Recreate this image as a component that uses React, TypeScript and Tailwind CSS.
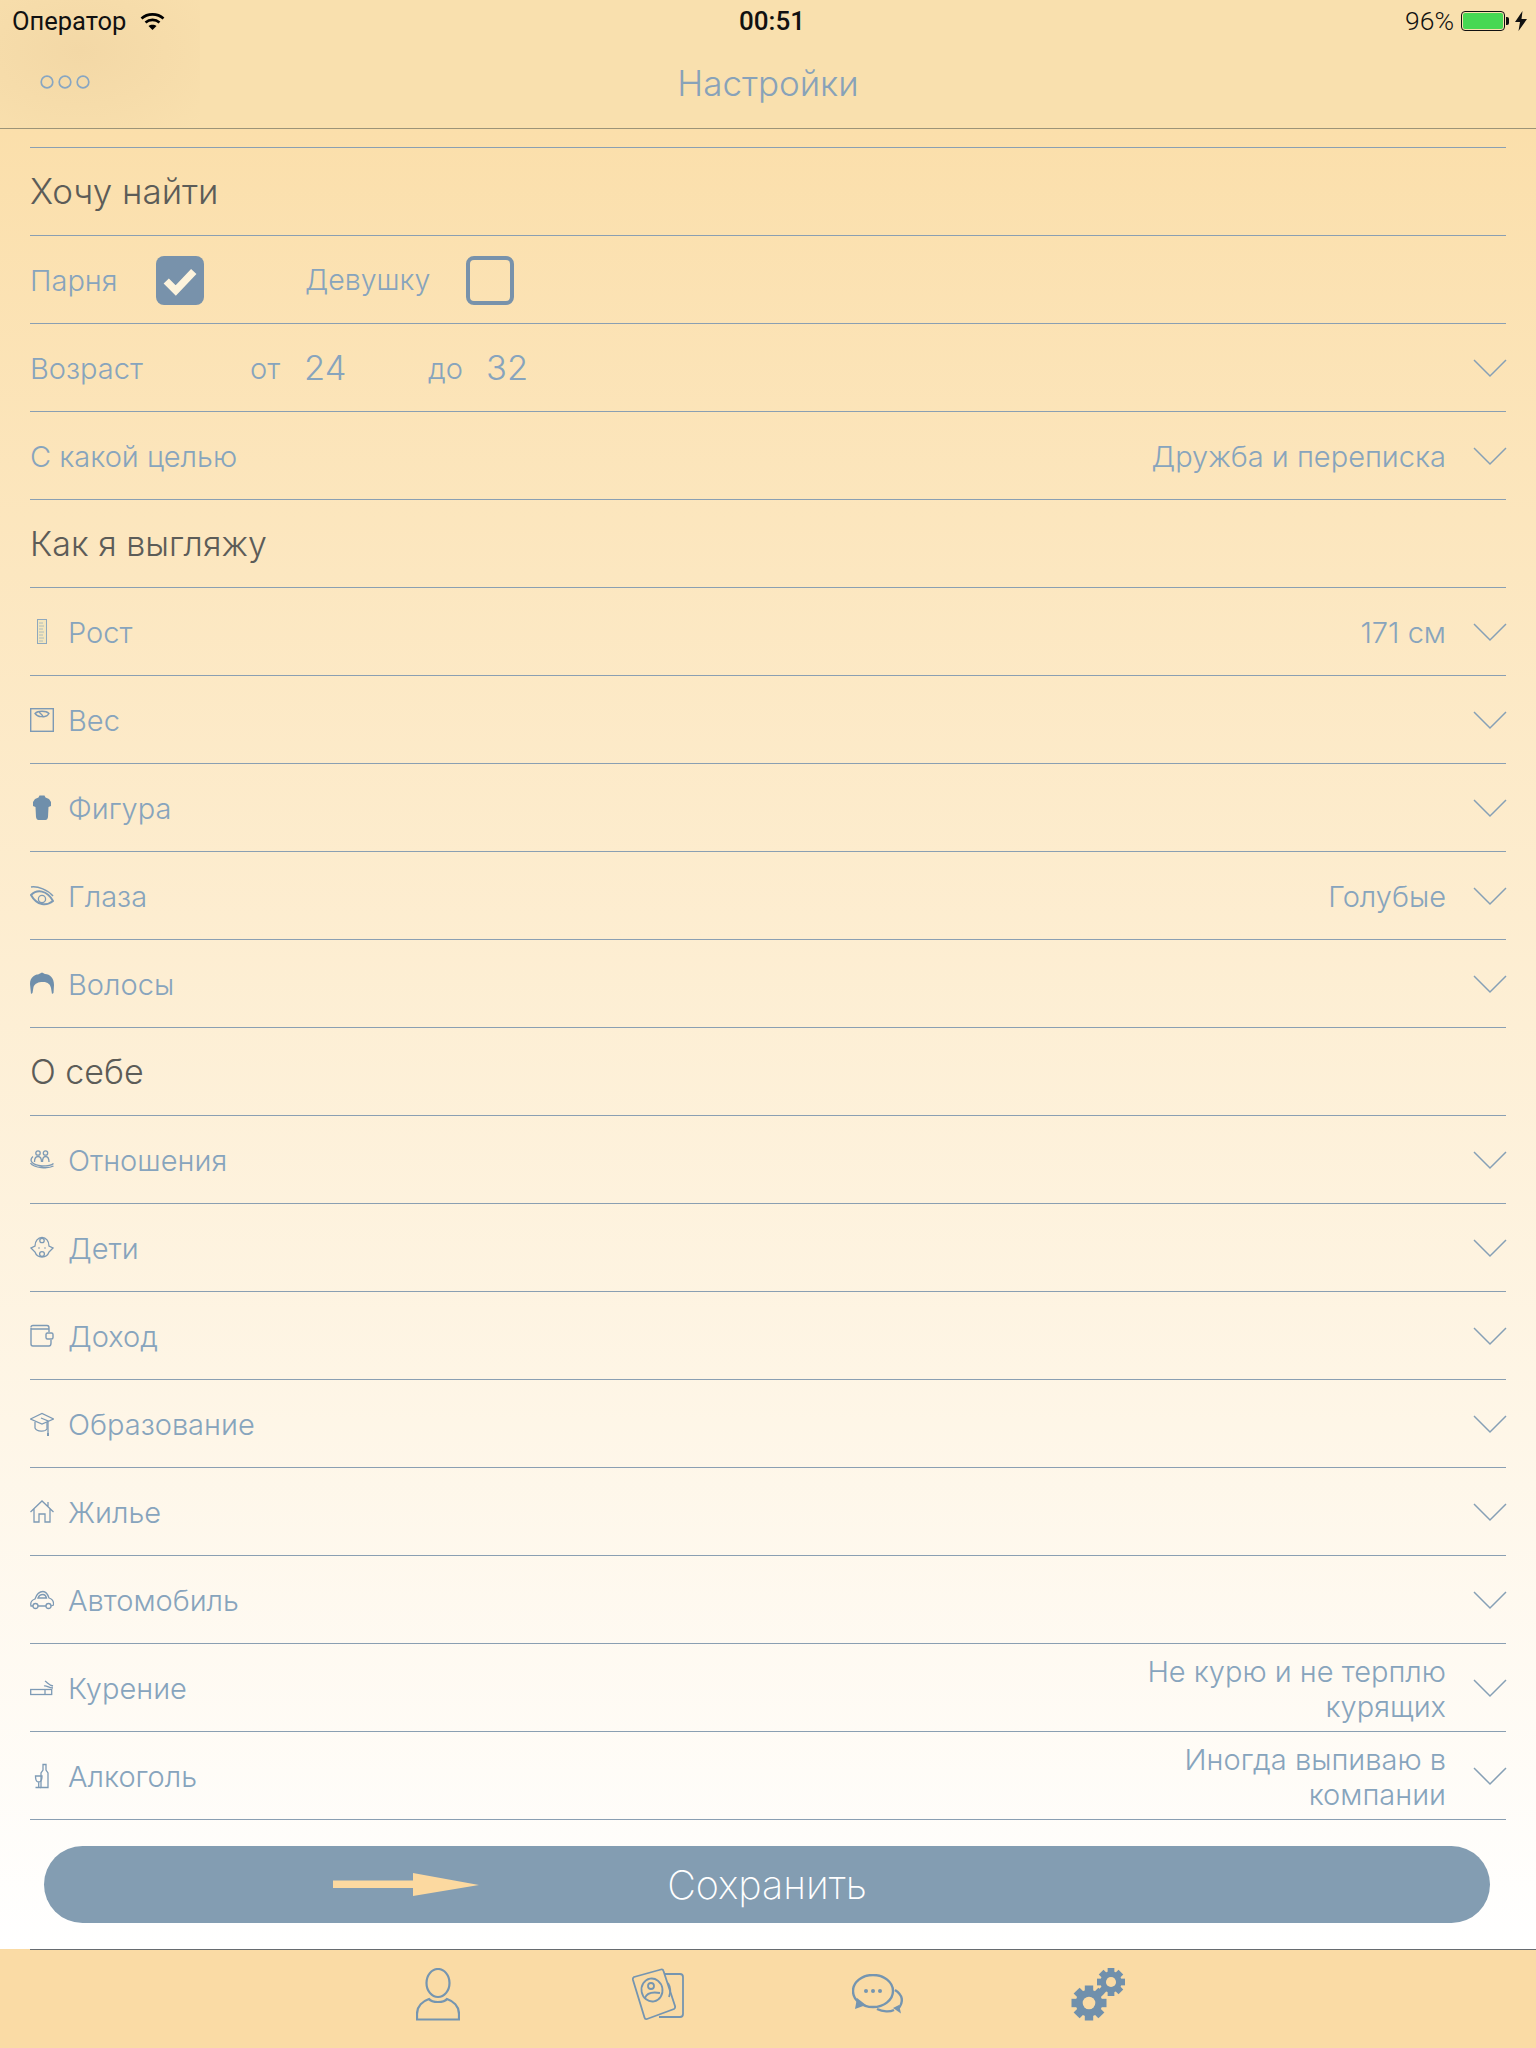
import React from 'react';

const Chevron = () => (
  <svg width="34" height="20" viewBox="0 0 34 20" fill="none" className="shrink-0 -mr-px">
    <path d="M1 2 L17 18 L33 2" stroke="#86a0b6" strokeWidth="1.5" />
  </svg>
);

const stroke = { fill: 'none', stroke: '#7d9ab5', strokeWidth: 1.3 };

const RulerIcon = () => (
  <svg width="24" height="26" viewBox="0 0 24 26">
    <rect x="7.5" y="0.5" width="9" height="24" fill="#f4e6bd" stroke="#8fa8bd" strokeWidth="1" />
    <path d="M9 4h4M9 7h5M9 10h4M9 13h5M9 16h4M9 19h5M9 22h4" stroke="#9fb2bd" strokeWidth="0.8" />
  </svg>
);
const ScaleIcon = () => (
  <svg width="24" height="26" viewBox="0 0 24 26">
    <rect x="0.7" y="1.7" width="22.6" height="22.6" {...stroke} strokeWidth="1.4" />
    <path d="M5 6.5 C8 3.5 16 3.5 19 6.5 C17 10 14 10 12 9.5 C9 10 7 9 5 6.5Z" {...stroke} />
    <path d="M9 5 L13 9" {...stroke} />
  </svg>
);
const ShirtIcon = () => (
  <svg width="24" height="26" viewBox="0 0 24 26">
    <path d="M9.500 0.500 H14.500 L15.500 2.500 L19 4 L21 7 L21 11 L18.500 12 L18 22 Q17.500 25 15.500 25 H8.500 Q6.500 25 6 22 L5.500 12 L3 11 L3 7 L5 4 L8.500 2.500Z" fill="#6f8fab" />
  </svg>
);
const EyeIcon = () => (
  <svg width="24" height="26" viewBox="0 0 24 26">
    <path d="M1 12 C7 6 17 7 23 18 C17 23 7 23 1 12Z" {...stroke} strokeWidth="2" />
    <circle cx="12" cy="16" r="3.600" {...stroke} />
    <path d="M1 4 C8 3 18 7 23 13" {...stroke} strokeWidth="1.500" />
  </svg>
);
const HairIcon = () => (
  <svg width="24" height="26" viewBox="0 0 24 26">
    <path d="M0 13 C0 6 5 3.500 8 3.500 L12 1.500 L15 3 C20 3 24 7 24 14 L23.500 22 L22 23 L21 17 C20 13 18 12 15 11 C10 10.500 5 11.500 3.500 16 L2.500 22 L1 23Z" fill="#6f8fab" />
  </svg>
);
const CoupleIcon = () => (
  <svg width="24" height="26" viewBox="0 0 24 26">
    <circle cx="8" cy="6" r="2.200" {...stroke} />
    <circle cx="15.500" cy="6" r="2.200" {...stroke} />
    <path d="M4.500 15 C4.500 11 6 9.500 8 9.500 C10 9.500 11.500 11 11.500 15 M12.500 15 C12.500 11 13.500 9.500 15.500 9.500 C17.500 9.500 19 11 19 15" {...stroke} />
    <path d="M3 9.500 C-1 13 1 18 12 19 C18 19 22 18 23.500 16.500 M0.500 16 C4 21 18 22 23.500 19" {...stroke} />
  </svg>
);
const BabyIcon = () => (
  <svg width="24" height="26" viewBox="0 0 24 26">
    <path d="M5 11 C5 6 8 2.500 12 2.500 C16 2.500 19 6 19 11 L23 13 L19 17 C18 20 15 22 12 22 C9 22 6 20 5 17 L1 13Z" {...stroke} />
    <circle cx="12" cy="5.500" r="2.200" {...stroke} />
    <circle cx="9" cy="13" r="0.800" fill="#7d9ab5" />
    <circle cx="15" cy="13" r="0.800" fill="#7d9ab5" />
    <circle cx="12" cy="19" r="2.400" {...stroke} />
  </svg>
);
const WalletIcon = () => (
  <svg width="24" height="26" viewBox="0 0 24 26">
    <path d="M1 4.500 Q1 2.500 3 2.500 H17 Q19 2.500 19 5 V9 M1 5 V21 Q1 23 3 23 H19 Q21 23 21 20 V17 M1 6 H19" {...stroke} strokeWidth="1.400" />
    <rect x="16" y="10" width="7" height="6" rx="1.500" {...stroke} strokeWidth="1.400" />
  </svg>
);
const CapIcon = () => (
  <svg width="24" height="26" viewBox="0 0 24 26">
    <path d="M0.500 8 L12 2.500 L23.500 8 L12 13Z" {...stroke} />
    <path d="M5 11 V17 C7 21 15 21 17 18 V11" {...stroke} />
    <path d="M11 7 L18 10 V22" {...stroke} />
    <path d="M17 22 h2 v3 h-2z" fill="#7d9ab5" />
  </svg>
);
const HouseIcon = () => (
  <svg width="24" height="26" viewBox="0 0 24 26">
    <path d="M0.500 13 L12 2 L23.500 13 M4 10 V23 H9 V15 H15 V23 H20 V10 M18 7.500 V3" {...stroke} />
  </svg>
);
const CarIcon = () => (
  <svg width="24" height="26" viewBox="0 0 24 26">
    <path d="M3 19 H1 C0 15 2 13 5 12 C7 6 10 4.500 13 4.500 C16 4.500 18 8 19 11 C22 12 24 14 23.500 18 L21 19 M8 19 H16" {...stroke} />
    <path d="M8 11 C9 8 11 7.500 13 7.500 C15 7.500 16 9 16.500 11Z" {...stroke} />
    <circle cx="5.500" cy="19" r="2.500" {...stroke} />
    <circle cx="18.500" cy="19" r="2.500" {...stroke} />
  </svg>
);
const SmokeIcon = () => (
  <svg width="24" height="26" viewBox="0 0 24 26">
    <rect x="0.700" y="14.500" width="21" height="5" {...stroke} />
    <path d="M15 14.500 V19.500 M14 11 C17 10 18 13 23 13 M15 6 C18 8 19 10 23 11" {...stroke} />
  </svg>
);
const BottleIcon = () => (
  <svg width="24" height="26" viewBox="0 0 24 26">
    <path d="M13 1.500 H16 V7 L18 10 V24.500 H11 V10 L13 7Z" {...stroke} />
    <path d="M5.500 13 H12 C12 18 10 19 8.700 19 C7 19 5.500 18 5.500 13Z M8.700 19 V24.500 M5.500 24.500 H11" {...stroke} />
  </svg>
);

const Gear = ({ cx, cy, r }: { cx: number; cy: number; r: number }) => (
  <g>
    {[0, 45, 90, 135].map((a) => (
      <rect
        key={a}
        x={cx - r * 0.24}
        y={cy - r}
        width={r * 0.48}
        height={r * 2}
        fill="#7090ac"
        transform={`rotate(${a} ${cx} ${cy})`}
      />
    ))}
    <circle cx={cx} cy={cy} r={r * 0.76} fill="#7090ac" />
    <circle cx={cx} cy={cy} r={r * 0.36} fill="#fadba5" />
  </g>
);

type Row =
  | { kind: 'heading'; label: string }
  | { kind: 'field'; label: string; value?: string; icon?: React.ReactNode };

const rows: Row[] = [
  { kind: 'field', label: 'С какой целью', value: 'Дружба и переписка' },
  { kind: 'heading', label: 'Как я выгляжу' },
  { kind: 'field', label: 'Рост', value: '171 см', icon: <RulerIcon /> },
  { kind: 'field', label: 'Вес', icon: <ScaleIcon /> },
  { kind: 'field', label: 'Фигура', icon: <ShirtIcon /> },
  { kind: 'field', label: 'Глаза', value: 'Голубые', icon: <EyeIcon /> },
  { kind: 'field', label: 'Волосы', icon: <HairIcon /> },
  { kind: 'heading', label: 'О себе' },
  { kind: 'field', label: 'Отношения', icon: <CoupleIcon /> },
  { kind: 'field', label: 'Дети', icon: <BabyIcon /> },
  { kind: 'field', label: 'Доход', icon: <WalletIcon /> },
  { kind: 'field', label: 'Образование', icon: <CapIcon /> },
  { kind: 'field', label: 'Жилье', icon: <HouseIcon /> },
  { kind: 'field', label: 'Автомобиль', icon: <CarIcon /> },
  { kind: 'field', label: 'Курение', value: 'Не курю и не терплю курящих', icon: <SmokeIcon /> },
  { kind: 'field', label: 'Алкоголь', value: 'Иногда выпиваю в компании', icon: <BottleIcon /> },
];

const rowClass = 'h-[88px] flex items-center border-b border-[#8a9fb2]';

const ListRow = ({ row }: { row: Row }) => {
  if (row.kind === 'heading') {
    return <div className={`${rowClass} text-[34px] font-light text-[#5c5c58]`}>{row.label}</div>;
  }
  return (
    <div className={`${rowClass} text-[#87a4bd] text-[29px] font-light`}>
      {row.icon && <div className="w-[24px] h-[26px] mr-[14px] shrink-0">{row.icon}</div>}
      <span className="flex-1 pt-[2px]">{row.label}</span>
      {row.value && (
        <span className="w-[360px] text-right leading-[35px] pt-[2px] pl-[30px]">{row.value}</span>
      )}
      <div className="ml-[27px]">
        <Chevron />
      </div>
    </div>
  );
};

export default function App() {
  return (
    <div className="relative w-[1536px] h-[2048px] flex flex-col overflow-hidden font-['Inter','Noto_Sans',sans-serif]">
      <header className="relative h-[129px] shrink-0 bg-[#f9e0ae] border-b border-[#9c9478]">
        <div className="absolute left-0 top-0 w-[200px] h-[128px] bg-[radial-gradient(ellipse_at_40%_40%,#f3d8a6_0%,#f6dcaa_50%,#f9e0ae_100%)]" />
        <div className="relative h-[42px] flex items-center justify-between pl-[12px] pr-[9px] text-[#111] text-[25.5px] font-['Roboto',sans-serif]">
          <div className="flex items-center gap-[14px]">
            <span>Оператор</span>
            <svg width="25" height="19" viewBox="0 0 25 19" fill="none" stroke="#000" strokeWidth="2.600">
              <path d="M1.500 6.500 C7.500 1 17.500 1 23.500 6.500" />
              <path d="M5.500 10.500 C9.500 7 15.500 7 19.500 10.500" />
              <path d="M12.500 18 L8.500 14 C10.500 12.400 14.500 12.400 16.500 14Z" fill="#000" stroke="none" />
            </svg>
          </div>
          <span className="absolute left-[739px] font-medium text-[26px]">00:51</span>
          <div className="flex items-center">
            <span className="font-light mr-[7px] text-[26.5px]">96%</span>
            <div className="w-[44px] h-[20px] border-[1.5px] border-[#111] rounded-[4px] p-px">
              <div className="w-full h-full bg-[#47d853] rounded-[2px]" />
            </div>
            <div className="w-[3px] h-[8px] bg-[#111] rounded-r-[2px] ml-px mr-[6px]" />
            <svg width="12" height="20" viewBox="0 0 12 20">
              <path d="M7.500 0 L0 11 H5 L3.500 20 L12 8 H6.500Z" fill="#111" />
            </svg>
          </div>
        </div>
        <div className="relative h-[86px] flex items-center justify-center text-[35px] font-light text-[#88a2b9] -mt-[2px]">
          <svg width="50" height="16" viewBox="0 0 50 16" fill="none" stroke="#88a6c2" strokeWidth="1.700" className="absolute left-[40px] top-[34px]">
            <circle cx="7" cy="8" r="5.800" />
            <circle cx="25" cy="8" r="5.800" />
            <circle cx="43" cy="8" r="5.800" />
          </svg>
          Настройки
        </div>
      </header>

      <main className="h-[1820px] shrink-0 bg-linear-to-b from-[#fbdfab] to-white">
        <div className="mx-[30px] pt-[18px]">
          <div className="border-t border-[#8a9fb2]">
            <div className={`${rowClass} text-[35px] font-light text-[#5c5c58]`}>Хочу найти</div>
            <div className={`${rowClass} text-[29px] font-light text-[#87a4bd] pt-[2px]`}>
              <span className="w-[126px]">Парня</span>
              <div className="w-[48px] h-[49px] rounded-[8px] bg-[#7892ab] flex items-center justify-center">
                <svg width="36" height="30" viewBox="0 0 34 28" fill="none">
                  <path d="M4 14 L13 23 L30 5" stroke="#fdf3dc" strokeWidth="7" />
                </svg>
              </div>
              <span className="ml-[101px] w-[161px] text-[28.5px]">Девушку</span>
              <div className="w-[48px] h-[49px] rounded-[8px] border-[4px] border-[#7892ab]" />
            </div>
            <div className={`${rowClass} text-[29px] font-light text-[#87a4bd]`}>
              <span className="w-[220px] pt-[2px]">Возраст</span>
              <span className="w-[54px] pt-[2px]">от</span>
              <span className="w-[124px] text-[34.5px]">24</span>
              <span className="w-[58px] pt-[2px]">до</span>
              <span className="text-[34.5px]">32</span>
              <div className="ml-auto">
                <Chevron />
              </div>
            </div>
            {rows.map((row) => (
              <ListRow key={row.label} row={row} />
            ))}
          </div>
        </div>
        <button className="relative block w-[1446px] h-[77px] ml-[44px] mt-[26px] pt-[2px] rounded-full bg-[#839db2] text-white text-[39.5px] font-extralight text-center">
          <svg width="146" height="24" viewBox="0 0 146 24" className="absolute left-[289px] top-[27px]">
            <path d="M0 7.500 H80 V0 L146 12 L80 23 V15 H0Z" fill="#fcd9a0" />
          </svg>
          Сохранить
        </button>
      </main>

      <nav className="flex-1 bg-[#fadba5]">
        <div className="ml-[30px] h-px bg-[#666b70]" />
        <div className="flex pl-[328px] pt-[18px]">
          <div className="w-[220px] flex justify-center">
            <svg width="44" height="53" viewBox="0 0 44 53" fill="none" stroke="#7595b0" strokeWidth="2.200">
              <ellipse cx="22" cy="15" rx="11.500" ry="14" />
              <path d="M13 31 C7 33 1 38 1 46 V51.500 H43 V46 C43 38 37 33 31 31 C28 35 16 35 13 31Z" />
            </svg>
          </div>
          <div className="w-[220px] flex justify-center">
            <svg width="52" height="53" viewBox="0 0 52 53" fill="none" stroke="#7595b0" strokeWidth="1.800">
              <path d="M33 6 H48 Q51 6 51 9 V46 Q51 49 48 49 H27" />
              <path d="M2 9 L29 1.500 Q31 1 31.500 3 L43 38 Q43.500 40 42 41 L15 51 Q13 51.500 12.500 49.500 L1 12 Q0.500 10 2 9Z" />
              <ellipse cx="20" cy="22" rx="10.500" ry="11.500" transform="rotate(-10 20 22)" />
              <circle cx="19" cy="18" r="3" />
              <path d="M13 30 C15 24 22 24 28 25" />
              <path d="M36 15 C38.500 19 38.500 25 37 29" />
            </svg>
          </div>
          <div className="w-[220px] flex justify-center pt-[6px]">
            <svg width="52" height="40" viewBox="0 0 52 40" fill="none" stroke="#7595b0" strokeWidth="2.400">
              <ellipse cx="21" cy="17" rx="20" ry="16" />
              <path d="M3 35 L5 24 L14 31Z" fill="#7595b0" stroke="none" />
              <circle cx="14" cy="17" r="2" fill="#7595b0" stroke="none" />
              <circle cx="21" cy="17" r="2" fill="#7595b0" stroke="none" />
              <circle cx="28" cy="17" r="2" fill="#7595b0" stroke="none" />
              <path d="M43 16 C51 21 52 28 46 35 M25 35 C31 38 38 38 42 36" />
              <path d="M49 39.500 L41 34 L47 31 Z" fill="#7595b0" stroke="none" />
            </svg>
          </div>
          <div className="w-[220px] flex justify-center">
            <svg width="54" height="53" viewBox="0 0 54 53">
              <Gear cx={18} cy={35} r={17.500} />
              <Gear cx={40} cy={14} r={14} />
            </svg>
          </div>
        </div>
      </nav>
    </div>
  );
}
